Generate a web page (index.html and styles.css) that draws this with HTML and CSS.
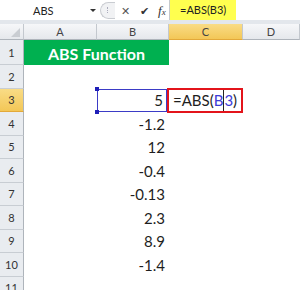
FILE: index.html
```html
<!DOCTYPE html>
<html lang="en">
  <head>
    <meta charset="UTF-8" />
    <meta name="viewport" content="width=device-width, initial-scale=1.0" />
    <link rel="stylesheet" href="styles.css">
    <title>ABS Function</title>
  </head>
  <body>
    <div class="formula-bar">
      <div class="name-box">
        <span>ABS</span>
        <span class="drop"></span>
      </div>
      <div class="bar-tools">
        <span class="grip"><i></i></span>
        <span class="tool cancel">&#x2715;</span>
        <span class="tool enter">&#x2714;</span>
        <span class="tool fx">f<small>x</small></span>
      </div>
      <div class="formula-input">
        <span class="formula-text">=ABS(B3)</span>
      </div>
    </div>

    <div class="sheet">
      <!-- column headers -->
      <div class="corner"></div>
      <div class="col-head">A</div>
      <div class="col-head">B</div>
      <div class="col-head active">C</div>
      <div class="col-head">D</div>

      <!-- row 1 -->
      <div class="row-head">1</div>
      <div class="cell title">ABS Function</div>
      <div class="cell"></div>
      <div class="cell"></div>

      <!-- row 2 -->
      <div class="row-head">2</div>
      <div class="cell"></div><div class="cell"></div><div class="cell"></div><div class="cell"></div>

      <!-- row 3 -->
      <div class="row-head active">3</div>
      <div class="cell"></div>
      <div class="cell num selected">5<i class="handle top"></i><i class="handle bottom"></i></div>
      <div class="cell editing">
        <span class="edit-box">=ABS(<b class="ref">B</b><i class="caret"></i><b class="ref">3</b>)</span>
      </div>
      <div class="cell"></div>
    </div>
    <script>
      const values = ['-1.2', '12', '-0.4', '-0.13', '2.3', '8.9', '-1.4', ''];
      const sheet = document.querySelector('.sheet');
      values.forEach((v, i) => {
        const rh = document.createElement('div');
        rh.className = 'row-head';
        rh.textContent = i + 4;
        sheet.appendChild(rh);
        for (let c = 0; c < 4; c++) {
          const d = document.createElement('div');
          d.className = c === 1 ? 'cell num' : 'cell';
          if (c === 1) d.textContent = v;
          sheet.appendChild(d);
        }
      });
    </script>
  </body>
</html>
```

FILE: styles.css
```css
body {
  margin: 0;
  width: 300px;
  height: 290px;
  overflow: hidden;
  background: #fff;
  font-family: Lato, 'Open Sans', sans-serif;
}

.formula-bar {
  display: flex;
  height: 20px;
  border-bottom: 4px solid #e3e7ec;
  background: #fff;
}

.name-box {
  width: 100px;
  box-sizing: border-box;
  display: flex;
  align-items: center;
  padding-left: 33px;
  font-size: 11px;
  color: #222;
  position: relative;
}
.name-box .drop {
  position: absolute;
  left: 90px;
  top: 9px;
  border-left: 3px solid transparent;
  border-right: 3px solid transparent;
  border-top: 3px solid #333;
}

.bar-tools {
  width: 69px;
  display: flex;
  align-items: center;
  color: #444;
}
.grip {
  width: 15px;
  height: 17px;
  border: 1px solid #c9ccd1;
  border-right: none;
  border-radius: 9px 0 0 9px;
  background: #f1f2f4;
  display: flex;
  align-items: center;
  justify-content: center;
  box-sizing: border-box;
}
.grip i {
  width: 2px;
  height: 6px;
  border-left: 1px dotted #aab;
}
.tool {
  font-size: 11px;
  line-height: 1;
}
.cancel { margin-left: 6px; color: #555; }
.enter { margin-left: 10px; color: #333; }
.fx {
  margin-left: 9px;
  font-family: 'Liberation Serif', serif;
  font-style: italic;
  font-size: 13px;
  color: #333;
}
.fx small { font-size: 9px; }

.formula-input {
  flex: 1;
  border-left: 1px solid #c5c9ce;
  display: flex;
}
.formula-text {
  background: #ffff4f;
  width: 66px;
  padding-left: 10px;
  box-sizing: border-box;
  font-size: 11px;
  line-height: 20px;
  color: #222;
}

.sheet {
  display: grid;
  grid-template-columns: 24px 73px 72px 74px 57px;
  grid-template-rows: 16px 25px;
  grid-auto-rows: 23.5px;
}

.corner, .col-head, .row-head {
  background: linear-gradient(#f6f7f9, #e5e8ec);
  color: #444;
  font-size: 11px;
  box-sizing: border-box;
  display: flex;
  align-items: center;
  justify-content: center;
}
.corner {
  border-right: 1px solid #c3c8ce;
  border-bottom: 1px solid #aeb4bb;
  position: relative;
}
.corner::after {
  content: '';
  position: absolute;
  right: 3px;
  bottom: 2px;
  border-left: 9px solid transparent;
  border-bottom: 9px solid #c9cdd2;
}
.col-head {
  border-right: 1px solid #c3c8ce;
  border-bottom: 1px solid #aeb4bb;
}
.row-head {
  background: #e9ecf0;
  border-right: 1px solid #aeb4bb;
  border-bottom: 1px solid #c8cdd3;
  color: #333;
}
.col-head.active, .row-head.active {
  background: linear-gradient(#f9dc86, #f3c757);
  border-bottom-color: #e3a93a;
}

.cell {
  font-size: 15px;
  color: #1e1e1e;
  display: flex;
  align-items: center;
  position: relative;
}
.cell.num {
  justify-content: flex-end;
  padding-right: 4px;
}
.title {
  grid-column: span 2;
  background: #00b050;
  color: #fff;
  font-weight: bold;
  font-size: 16px;
  justify-content: center;
  padding-top: 2px;
}

.selected {
  box-shadow: inset 0 0 0 1px #3b3bc6;
  margin-right: 2px;
  padding-right: 2px;
}
.handle {
  position: absolute;
  left: -2px;
  width: 4px;
  height: 4px;
  background: #1f1fb8;
}
.handle.top { top: -2px; }
.handle.bottom { bottom: -2px; }

.edit-box {
  position: absolute;
  left: -2px;
  top: -1px;
  width: 76px;
  height: 25px;
  box-sizing: border-box;
  border: 2px solid #e3141b;
  padding-left: 4px;
  display: flex;
  align-items: center;
  background: #fff;
}
.ref {
  font-weight: normal;
  color: #3c3cd6;
}
.caret {
  width: 1px;
  align-self: stretch;
  background: #222;
}
```
